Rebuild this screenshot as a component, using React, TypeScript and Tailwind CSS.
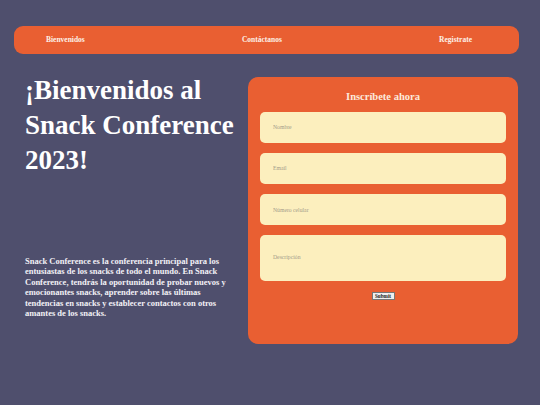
import { useState } from "react";

const NAV = ["Bienvenidos", "Contáctanos", "Registrate"];

const INTRO = [
  "Snack Conference es la conferencia principal para los",
  "entusiastas de los snacks de todo el mundo. En Snack",
  "Conference, tendrás la oportunidad de probar nuevos y",
  "emocionantes snacks, aprender sobre las últimas",
  "tendencias en snacks y establecer contactos con otros",
  "amantes de los snacks.",
];

export default function App() {
  const [form, setForm] = useState({ nombre: "", email: "", celular: "", descripcion: "" });
  const set = (k: keyof typeof form) => (e: React.ChangeEvent<HTMLInputElement | HTMLTextAreaElement>) =>
    setForm({ ...form, [k]: e.target.value });

  return (
    <div className="min-h-[405px] w-full bg-[#4f4f6d] pt-[26px] font-['Liberation_Serif',serif]">
      <nav className="ml-[14px] mr-[21px] flex h-[28px] items-center justify-between rounded-[9px] bg-[#e95f32] pl-[32px] pr-[47px]">
        {NAV.map((n) => (
          <a key={n} href="#" className="text-[7.5px] font-bold leading-none text-[#fdf1e8]">
            {n}
          </a>
        ))}
      </nav>

      <main className="mt-[18.5px] flex items-start justify-between pl-[25px] pr-[22px]">
        <section className="w-[215px]">
          <h1 className="text-[27px] font-bold leading-[35px] text-white">
            ¡Bienvenidos al Snack Conference 2023!
          </h1>
          <p className="mt-[78px] whitespace-nowrap text-[8.5px] font-bold leading-[10.6px] text-[#f3f1f6]">
            {INTRO.map((l, i) => (
              <span key={i} className="block">{l}</span>
            ))}
          </p>
        </section>

        <form
          onSubmit={(e) => e.preventDefault()}
          className="mt-[4.5px] flex h-[267px] w-[270px] flex-col items-center rounded-[10px] bg-[#e95f32] px-[12px] pt-[14px]"
        >
          <h2 className="text-[10.5px] font-bold leading-[12px] text-[#fde9dc]">Inscríbete ahora</h2>
          <div className="mt-[8.6px] flex w-full flex-col gap-[10.3px]">
            <Field placeholder="Nombre" value={form.nombre} onChange={set("nombre")} />
            <Field placeholder="Email" value={form.email} onChange={set("email")} />
            <Field placeholder="Número celular" value={form.celular} onChange={set("celular")} />
            <textarea
              placeholder="Descripción"
              value={form.descripcion}
              onChange={set("descripcion")}
              className="h-[46px] w-full resize-none rounded-[5px] bg-[#fcefbe] px-[13px] pt-[19px] text-[5.7px] leading-[7px] text-[#4a4a4a] outline-none placeholder:text-[#a39c8a]"
            />
          </div>
          <button
            type="submit"
            className="mt-[10.7px] h-[8.3px] w-[23px] border border-[#767676] bg-[#efefef] text-[5.2px] font-bold leading-none text-[#222]"
          >
            Submit
          </button>
        </form>
      </main>
    </div>
  );
}

function Field({
  placeholder, value, onChange,
}: {
  placeholder: string; value: string; onChange: (e: React.ChangeEvent<HTMLInputElement>) => void;
}) {
  return (
    <input
      placeholder={placeholder}
      value={value}
      onChange={onChange}
      className="h-[31px] w-full rounded-[5px] bg-[#fcefbe] px-[13px] text-[5.7px] text-[#4a4a4a] outline-none placeholder:text-[#a39c8a]"
    />
  );
}
